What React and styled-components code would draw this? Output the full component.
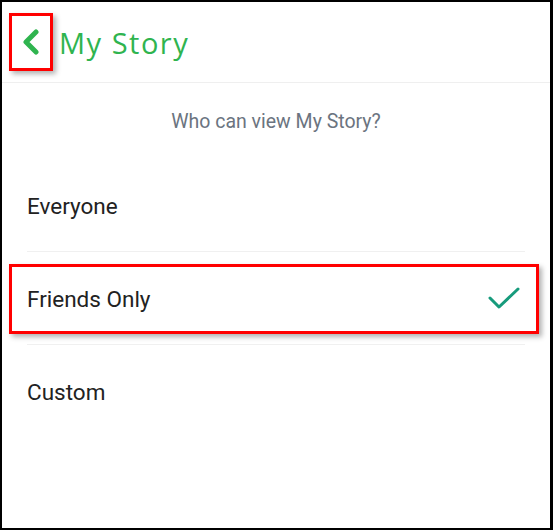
import React from "react";
import styled, { createGlobalStyle } from "styled-components";

const GlobalStyle = createGlobalStyle`
  body {
    margin: 0;
    background: #fff;
  }
`;

const Frame = styled.div`
  position: relative;
  width: 553px;
  height: 530px;
  box-sizing: border-box;
  border-style: solid;
  border-color: #000;
  border-width: 2px 3px 2px 2px;
  background: #fff;
  overflow: hidden;
  font-family: Roboto, "Liberation Sans", sans-serif;
`;

const Header = styled.div`
  display: flex;
  align-items: center;
  height: 80px;
  padding-left: 20px;
  border-bottom: 1px solid #efefef;
`;

const BackIcon = styled.svg`
  display: block;
  flex-shrink: 0;
`;

const Title = styled.h1`
  margin: 0 0 0 19px;
  font-family: "Open Sans", Lato, sans-serif;
  font-size: 29px;
  font-weight: 400;
  letter-spacing: 1.5px;
  color: #2fb44f;
`;

const Prompt = styled.div`
  display: flex;
  align-items: center;
  justify-content: center;
  height: 76px;
  font-size: 19.5px;
  color: #6b7480;
`;

const List = styled.div`
  margin: 0 25px;
`;

const Row = styled.div`
  display: flex;
  align-items: center;
  justify-content: space-between;
  height: 93px;
  padding-top: 2px;
  box-sizing: border-box;
  padding-right: 5px;
  border-bottom: 1px solid ${(p) => (p.$last ? "transparent" : "#f0f0f0")};
  font-size: 22.5px;
  color: #222;
`;

const Label = styled.span``;

const Highlight = styled.div`
  position: absolute;
  left: ${(p) => p.$x}px;
  top: ${(p) => p.$y}px;
  width: ${(p) => p.$w}px;
  height: ${(p) => p.$h}px;
  box-sizing: border-box;
  border: 3px solid #ff0000;
  box-shadow: 3px 3px 5px rgba(0, 0, 0, 0.3);
  pointer-events: none;
`;

const Check = () => (
  <svg width="32" height="24" viewBox="0 0 32 24">
    <polyline
      points="2,11 11,20 30,2"
      fill="none"
      stroke="#179b7c"
      strokeWidth="3"
      strokeLinecap="round"
      strokeLinejoin="round"
    />
  </svg>
);

const options = [
  { label: "Everyone" },
  { label: "Friends Only", selected: true },
  { label: "Custom" },
];

export default function App() {
  return (
    <>
      <GlobalStyle />
      <Frame>
        <Header>
          <BackIcon width="18" height="26" viewBox="0 0 18 26">
            <polyline
              points="14,3 4,13 14,23"
              fill="none"
              stroke="#2fb44f"
              strokeWidth="5"
              strokeLinecap="round"
              strokeLinejoin="round"
            />
          </BackIcon>
          <Title>My Story</Title>
        </Header>
        <Prompt>Who can view My Story?</Prompt>
        <List>
          {options.map((o, i) => (
            <Row key={o.label} $last={i === options.length - 1}>
              <Label>{o.label}</Label>
              {o.selected && <Check />}
            </Row>
          ))}
        </List>
        <Highlight $x={7} $y={11} $w={44} $h={58} />
        <Highlight $x={7} $y={262} $w={530} $h={70} />
      </Frame>
    </>
  );
}
